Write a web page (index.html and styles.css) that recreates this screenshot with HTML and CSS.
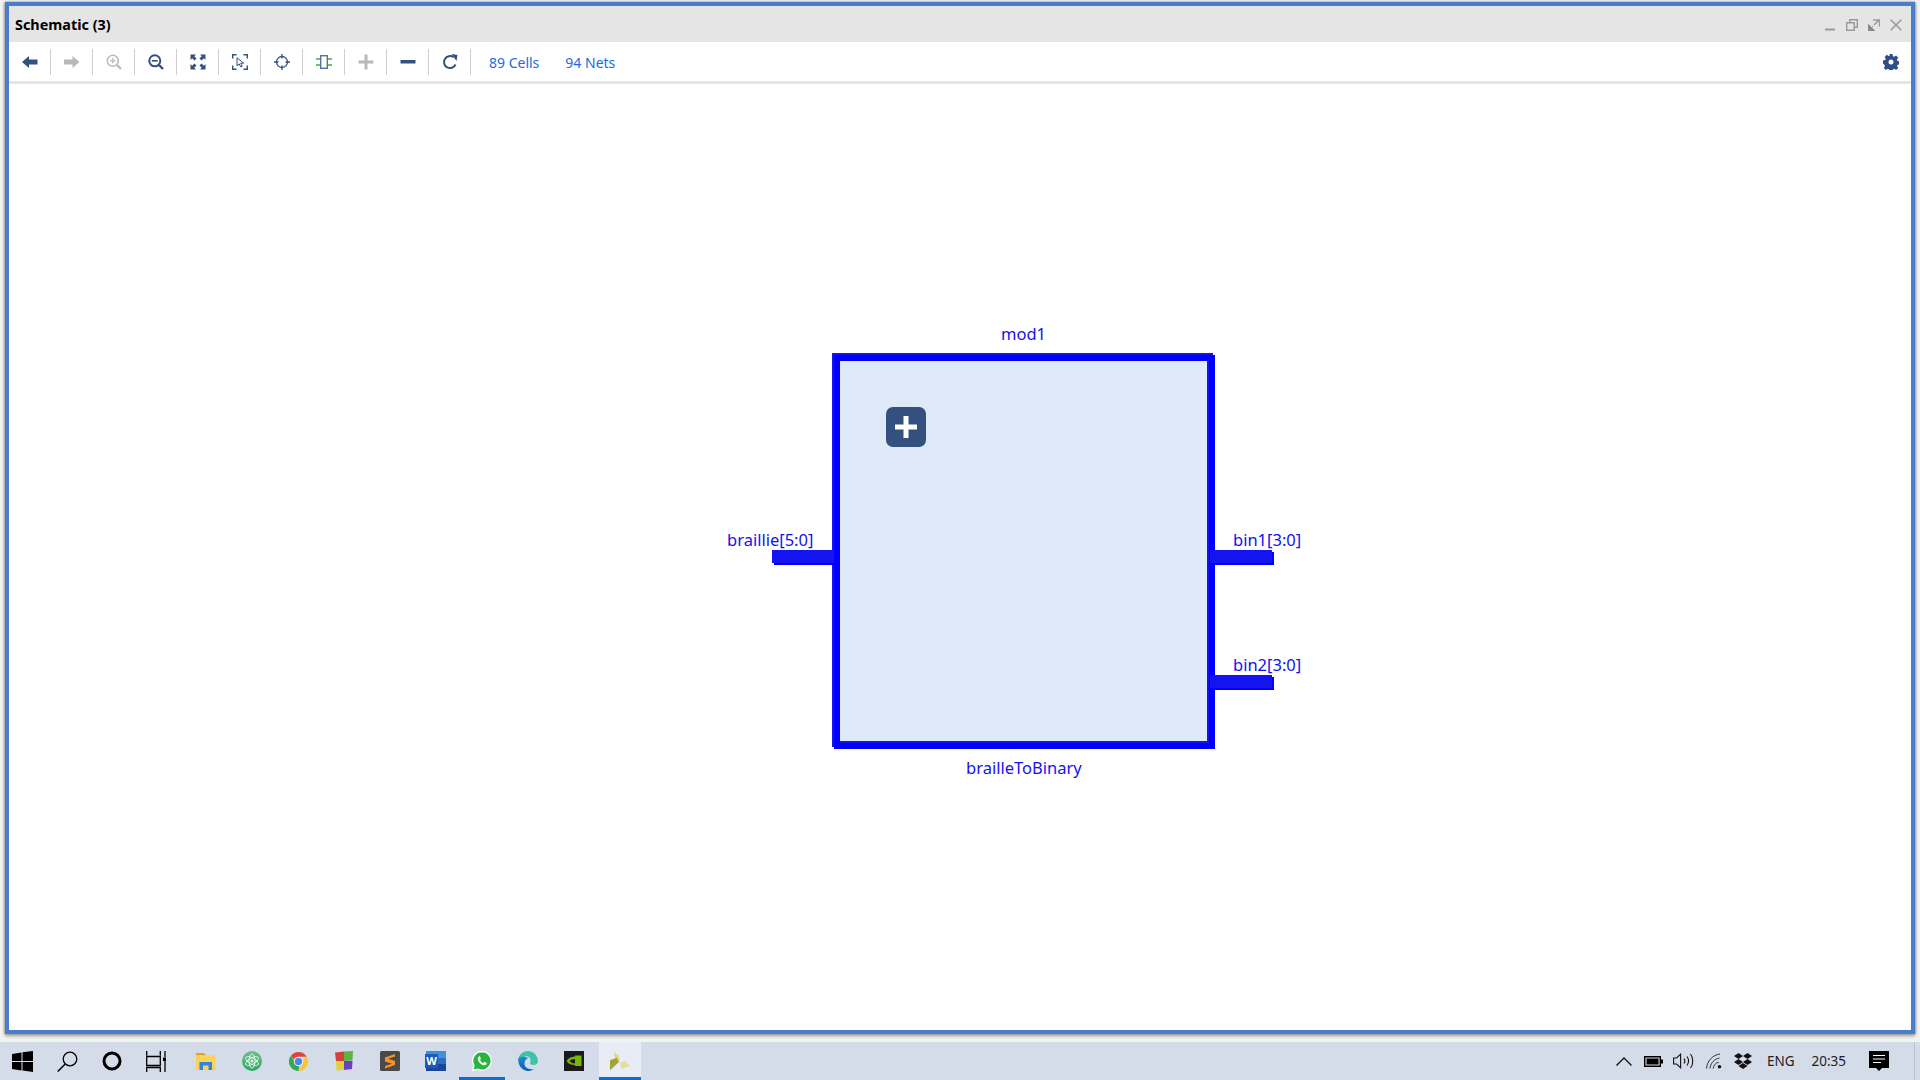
FILE: index.html
```html
<!DOCTYPE html>
<html lang="en">
<head>
    <meta charset="UTF-8">
    <title>Schematic (3)</title>
    <link rel="stylesheet" href="styles.css">
</head>
<body>
    <div class="desk">
        <div class="window">
            <div class="titlebar">
                <span class="title">Schematic (3)</span>
                <div class="win-controls">
                    <svg width="12" height="12" viewBox="0 0 12 12"><path d="M1 10.5h10" stroke="#9a9a9a" stroke-width="2" fill="none"/></svg>
                    <svg width="12" height="12" viewBox="0 0 12 12"><path d="M.7 3.7h7.6v7.6H.7zM3.7 3.5V.7h7.6v7.6H8.5" stroke="#9a9a9a" stroke-width="1.4" fill="none"/></svg>
                    <svg width="12" height="12" viewBox="0 0 12 12"><path d="M5 1h6.5v6.5M10.500 1.500 6 6" stroke="#9a9a9a" stroke-width="1.500" fill="none"/><path d="M.5 5.500v6h6L.5 5.500zM1 11l4-4" fill="#8a8a8a" stroke="#8a8a8a"/></svg>
                    <svg width="12" height="12" viewBox="0 0 12 12"><path d="M.7.7l10.600 10.600M11.300.7.7 11.300" stroke="#9a9a9a" stroke-width="1.600" fill="none"/></svg>
                </div>
            </div>

            <div class="toolbar">
                <div class="tool">
                    <svg width="16" height="14" viewBox="0 0 16 14"><path d="M0 7 7 1v3.500h8.500v5H7V13z" fill="#34507f"/></svg>
                </div>
                <div class="tool">
                    <svg width="16" height="14" viewBox="0 0 16 14"><path d="M15.500 7 8.500 1v3.500H0v5h8.500V13z" fill="#b9b9b9"/></svg>
                </div>
                <div class="tool">
                    <svg width="16" height="16" viewBox="0 0 16 16"><circle cx="6.800" cy="6.800" r="5.500" fill="none" stroke="#b9b9b9" stroke-width="1.500"/><path d="M4 6.800h5.600M6.800 4v5.600" stroke="#b9b9b9" stroke-width="1.200"/><path d="m11 11 4 4" stroke="#b9b9b9" stroke-width="2.200"/></svg>
                </div>
                <div class="tool">
                    <svg width="16" height="16" viewBox="0 0 16 16"><circle cx="6.800" cy="6.800" r="5.500" fill="none" stroke="#34507f" stroke-width="2"/><path d="M3.800 6.800h6" stroke="#34507f" stroke-width="1.600"/><path d="m11 11 4 4" stroke="#34507f" stroke-width="2.400"/></svg>
                </div>
                <div class="tool">
                    <svg width="16" height="16" viewBox="0 0 16 16"><path d="M.5.5h5.500L4.300 2.200 6.500 4.400 4.400 6.500 2.200 4.300.5 6zM15.500.5H10l1.700 1.700-2.200 2.200 2.100 2.100 2.200-2.200L15.500 6zM.5 15.500H6l-1.700-1.700 2.200-2.200-2.100-2.100-2.200 2.200L.5 10zM15.500 15.500H10l1.700-1.700-2.200-2.200 2.100-2.100 2.200 2.200L15.500 10z" fill="#34507f"/></svg>
                </div>
                <div class="tool">
                    <svg width="16" height="16" viewBox="0 0 16 16"><path d="M.7 4.500V.7h3.800M11.500.7h3.800v3.800M15.300 11.500v3.800h-3.800M4.500 15.300H.7v-3.800" fill="none" stroke="#34507f" stroke-width="1.400"/><path d="M5 3.800v8l2.200-1.900 1.500 3 1.500-.7-1.500-3h3z" fill="#fff" stroke="#34507f"/></svg>
                </div>
                <div class="tool">
                    <svg width="16" height="16" viewBox="0 0 16 16"><circle cx="8" cy="8" r="5.500" fill="none" stroke="#34507f" stroke-width="1.300"/><path d="M8 0v4.500M8 11.500V16M0 8h4.500M11.500 8H16" stroke="#34507f" stroke-width="1.300"/></svg>
                </div>
                <div class="tool">
                    <svg width="16" height="16" viewBox="0 0 16 16"><path d="M0 5h4M0 11h4M12 5h4M12 11h4" stroke="#3fae49" stroke-width="1.400"/><rect x="4.700" y="1.700" width="6.600" height="12.600" fill="#fff" stroke="#5a7199" stroke-width="1.400"/></svg>
                </div>
                <div class="tool">
                    <svg width="16" height="16" viewBox="0 0 16 16"><path d="M6.500.5h3v6h6v3h-6v6h-3v-6h-6v-3h6z" fill="#b9b9b9"/></svg>
                </div>
                <div class="tool">
                    <svg width="16" height="16" viewBox="0 0 16 16"><path d="M.5 6h15v3.500H.5z" fill="#34507f"/></svg>
                </div>
                <div class="tool">
                    <svg width="16" height="16" viewBox="0 0 16 16"><path d="M13.500 10.500A6 6 0 1 1 11.500 3.200" fill="none" stroke="#34507f" stroke-width="2"/><path d="M9.500 0 15.500 1 14.500 7z" fill="#34507f"/></svg>
                </div>
                <span class="stat stat-cells">89 Cells</span>
                <span class="stat stat-nets">94 Nets</span>
                <svg class="gear" width="16" height="16" viewBox="0 0 16 16"><path fill-rule="evenodd" d="M6.500 0h3l.4 2.200 1.300.6 1.900-1.200 2.100 2.100-1.200 1.900.6 1.300 2.200.4v3l-2.200.4-.6 1.300 1.200 1.900-2.100 2.100-1.900-1.200-1.300.6-.4 2.200h-3l-.4-2.200-1.300-.6-1.900 1.200-2.100-2.100 1.200-1.900-.6-1.300L0 9.500v-3l2.200-.4.6-1.300-1.200-1.900 2.100-2.100 1.900 1.200 1.300-.6zM8 5.500a2.500 2.500 0 1 0 0 5 2.500 2.500 0 0 0 0-5z" fill="#2f4f86"/></svg>
            </div>

            <div class="canvas">
                <!-- schematic block, coordinates are relative to the canvas -->
                <div class="block"><div class="expand"><svg width="22" height="22" viewBox="0 0 22 22"><path d="M8.500 0h5v8.500H22v5h-8.500V22h-5v-8.500H0v-5h8.500z" fill="#fff"/></svg></div></div>
                <div class="port port-left"></div>
                <div class="port port-bin1"></div>
                <div class="port port-bin2"></div>
                <span class="label label-mod">mod1</span>
                <span class="label label-type">brailleToBinary</span>
                <span class="label label-braille">braillie[5:0]</span>
                <span class="label label-bin1">bin1[3:0]</span>
                <span class="label label-bin2">bin2[3:0]</span>
            </div>
        </div>
    </div>

    <div class="taskbar">
        <div class="task task-sys">
            <svg width="21" height="21" viewBox="0 0 21 21"><path d="M0 3l9.500-1.500v8.500H0zM10.500 1.300 21 0v10H10.500zM0 11h9.500v8.500L0 18zM10.500 11H21v10l-10.500-1.500z" fill="#000"/></svg>
        </div>
        <div class="task">
            <svg width="21" height="21" viewBox="0 0 21 21"><circle cx="13" cy="8" r="6.800" fill="none" stroke="#000" stroke-width="1.300"/><path d="M8.200 13 .7 20.500" stroke="#000" stroke-width="1.500"/></svg>
        </div>
        <div class="task task-sys">
            <svg width="20" height="20" viewBox="0 0 20 20"><circle cx="10" cy="10" r="8" fill="none" stroke="#000" stroke-width="3"/></svg>
        </div>
        <div class="task task-sys">
            <svg width="20" height="21" viewBox="0 0 20 21"><path d="M.7 0v4.500M14.300 0v4.500M.7 5.500h13.600v9H.7zM.7 21v-4.500h13.600V21M19 0v6M19 10v11" fill="none" stroke="#000" stroke-width="1.300"/><path d="M17 6.500h3.500V10H17z" fill="#000"/></svg>
        </div>
        <div class="task task-first-app">
            <svg width="20" height="18" viewBox="0 0 20 18"><path d="M0 1h8l2 2.500H0z" fill="#e0a31e"/><path d="M0 3.500h19.500V18H0z" fill="#fbd35a"/><path d="M3.500 18v-8h12.500v8h-3.500v-4.500H7V18z" fill="#2f86d6"/></svg>
        </div>
        <div class="task">
            <svg width="20" height="20" viewBox="0 0 20 20"><defs><linearGradient id="atomfill" x1="0" y1="0" x2="0" y2="1"><stop offset="0" stop-color="#6dbf8a"/><stop offset="1" stop-color="#2fa866"/></linearGradient></defs><circle cx="10" cy="10" r="10" fill="url(#atomfill)"/><g fill="none" stroke="#e4f3e8" stroke-width="1"><ellipse cx="10" cy="10" rx="7" ry="3" transform="rotate(30 10 10)"/><ellipse cx="10" cy="10" rx="7" ry="3" transform="rotate(-30 10 10)"/><ellipse cx="10" cy="10" rx="7" ry="3" transform="rotate(90 10 10)"/></g><circle cx="10" cy="10" r="1.500" fill="#e4f3e8"/></svg>
        </div>
        <div class="task">
            <svg width="19" height="19" viewBox="0 0 20 20"><path d="M10 0a10 10 0 0 1 8.700 5H10a5 5 0 0 0-4.700 3.200L2.200 3.600A10 10 0 0 1 10 0z" fill="#e0453a"/><path d="M18.700 5A10 10 0 0 1 10 20l4.300-7.500A5 5 0 0 0 14.300 7.500z" fill="#fbc52d"/><path d="M10 20A10 10 0 0 1 2.200 3.600l4.300 7.600A5 5 0 0 0 11 15z" fill="#36a852"/><circle cx="10" cy="10" r="4.300" fill="#4a86e8" stroke="#fff" stroke-width="1"/></svg>
        </div>
        <div class="task">
            <svg width="20" height="20" viewBox="0 0 20 20"><path d="M1 1.500 10 .5v9.500H2z" fill="#d6403a"/><path d="M10 .5l9-.5-.5 9.500L10 10z" fill="#5cb342"/><path d="M2 10h8v9l-7.500.5z" fill="#dcd23c"/><path d="M10 10h8.500l-.5 8-8 1z" fill="#6b3fc0"/></svg>
        </div>
        <div class="task">
            <svg width="20" height="20" viewBox="0 0 20 20"><rect width="20" height="20" rx="1.500" fill="#4a4a4a"/><path d="M15 3 5 6.500v4l7 2.200-7 2.300V17.500l10-3.500v-4L8 7.800 15 5.500z" fill="#f7931e"/></svg>
        </div>
        <div class="task">
            <div class="word-icon"><span class="word-letter">W</span></div>
        </div>
        <div class="task task-running">
            <svg width="20" height="20" viewBox="0 0 20 20"><path d="M10 .5A9.300 9.300 0 0 0 2 14.500L.5 19.500l5.200-1.400A9.300 9.300 0 1 0 10 .5z" fill="#29b43f" stroke="#fff" stroke-width="1.300"/><path d="M7 5.500c-1.200.8-1.500 2.300-.8 4 .9 2.100 2.500 3.700 4.600 4.500 1.600.6 3 .3 3.800-.9.300-.5.300-.9.100-1.100l-1.900-1c-.3-.1-.5 0-.7.200l-.7.900c-1.500-.6-2.700-1.700-3.400-3.200l.7-.8c.2-.2.200-.4.100-.7l-.8-1.900c-.2-.4-.6-.4-1-.1z" fill="#fff"/></svg>
        </div>
        <div class="task">
            <svg width="20" height="20" viewBox="0 0 20 20"><defs><linearGradient id="edgeblue" x1="0" y1="0" x2="0" y2="1"><stop offset="0" stop-color="#1c8ad8"/><stop offset="1" stop-color="#0f5fb0"/></linearGradient></defs><path d="M10 0A10 10 0 0 1 20 10c0 2.500-2 4-4.500 4-2 0-3.500-.7-3.500-2 0-.6.500-1 .5-2A4 4 0 0 0 5 7.500C3 8.500.2 8 .2 8A10 10 0 0 1 10 0z" fill="#3fc3a5"/><path d="M.2 8C0 13 2.500 18.500 9 20c2.500.3 5-.5 7-2-2 .5-7.500.5-9-3-1.500-4 1-7.500 3-7.500S4 3 .2 8z" fill="url(#edgeblue)"/></svg>
        </div>
        <div class="task">
            <svg width="20" height="20" viewBox="0 0 20 20"><rect width="20" height="20" fill="#1a1a1a"/><path d="M2.500 10C5 6.500 8 5.500 11 5.500v-1h6.500v10.500H11v-1c-3.500 0-6.500-1-8.500-4z" fill="#76b900"/><path d="M5.500 10C7 8.500 9 7.800 11 8v4.500C9 12.500 7 11.700 5.500 10z" fill="#1a1a1a"/></svg>
        </div>
        <div class="task task-active">
            <svg width="20" height="19" viewBox="0 0 20 19"><path d="M4 0 8.300 3.300 10 10 5 5.700z" fill="#dfd782"/><path d="M0 8.300 6.700 5.700 9 10 0 18.300z" fill="#a6a332"/><path d="M10 11 15 9 20 14 11.700 16.700z" fill="#e3dea0"/></svg>
        </div>

        <div class="tray">
            <svg class="tray-chevron" width="16" height="9" viewBox="0 0 16 9"><path d="M.5 8.500 8 1l7.500 7.500" fill="none" stroke="#111" stroke-width="1.300"/></svg>
            <svg class="tray-battery" width="19" height="11" viewBox="0 0 19 11"><path d="M.7.7h15.600v9.600H.7z" fill="none" stroke="#000" stroke-width="1.400"/><path d="M2.500 2.500h12v6h-12zM17 3.500h2v4h-2z" fill="#000"/></svg>
            <svg class="tray-sound" width="21" height="16" viewBox="0 0 21 16"><path d="M.6 5h3l4-3.800v13.600l-4-3.800h-3z" fill="none" stroke="#111" stroke-width="1.100"/><path d="M11 5.500c1 1.400 1 3.600 0 5M14 3.500c1.800 2.600 1.800 6.400 0 9M17.500 1c3 3.600 3 10.400 0 14" fill="none" stroke="#111" stroke-width="1.100"/></svg>
            <svg class="tray-wifi" width="16" height="16" viewBox="0 0 16 16"><path d="M.6 15.500C1 8 6.500 2 14 1M4 15.500C4.400 10.500 8 6 13.500 5M7.200 15.500c.3-3 2.300-5.500 5.600-6.300" fill="none" stroke="#333" stroke-width="1"/><circle cx="13.500" cy="13.700" r="1.800" fill="#111"/></svg>
            <svg class="tray-dropbox" width="18" height="16" viewBox="0 0 18 16"><path d="M4.500 0 9 3 4.500 6 0 3zM13.500 0 18 3l-4.500 3L9 3zM4.500 6 9 9l-4.500 3L0 9zM13.500 6 18 9l-4.500 3L9 9zM4.500 13 9 10l4.500 3L9 16z" fill="#111"/></svg>
            <span class="tray-text tray-lang">ENG</span>
            <span class="tray-text tray-clock">20:35</span>
            <svg class="tray-notify" width="20" height="20" viewBox="0 0 20 20"><path d="M0 0h20v17h-7l-3 3-3-3H0z" fill="#000"/><path d="M4 4.500h12M4 8h12M4 11.500h8" stroke="#fff" stroke-width="1"/></svg>
        </div>
    </div>
</body>
</html>
```

FILE: styles.css
```css
body {
    margin: 0;
    width: 1920px;
    height: 1080px;
    overflow: hidden;
    font-family: "Noto Sans", sans-serif;
    background: #fff;
}
.desk {
    height: 1042px;
    box-sizing: border-box;
    padding: 2px 5px 8px 5px;
    display: flex;
    background: #f2f2f2;
}
.window {
    flex: 1;
    display: flex;
    flex-direction: column;
    border: 4px solid #4a7dcb;
    box-shadow: 0 2px 3px #a0a0a0, -1px 0 2px #a8a8a8, 1px 0 2px #a8a8a8;
    background: #fff;
}

/* barra del titolo */
.titlebar {
    height: 36px;
    flex: none;
    background: #e5e5e5;
    display: flex;
    align-items: center;
    justify-content: space-between;
    padding: 0 9px 0 6px;
}
.title {
    font-size: 14.400px;
    font-weight: 700;
    color: #000;
}
.win-controls {
    display: flex;
    gap: 10px;
    padding-top: 2px;
}

/* toolbar */
.toolbar {
    height: 39px;
    flex: none;
    display: flex;
    align-items: center;
    border-bottom: 3px solid #e5e5e5;
    padding-right: 12px;
}
.tool {
    width: 41px;
    height: 26px;
    display: flex;
    align-items: center;
    justify-content: center;
    border-right: 1px solid #cfcfcf;
}
.stat {
    font-size: 14px;
    color: #2468e4;
    padding-top: 1px;
}
.stat-cells {
    margin-left: 18px;
}
.stat-nets {
    margin-left: 26px;
}
.gear {
    margin-left: auto;
}

/* schematic */
.canvas {
    flex: 1;
    position: relative;
    background: #fff;
}
.block {
    position: absolute;
    left: 823px;
    top: 269px;
    box-sizing: border-box;
    width: 381px;
    height: 394px;
    border: 6px solid #1414f0;
    background: #deeaf8;
}
/* seconda linea spostata di 2px, come nel disegno originale */
.block::before {
    content: "";
    position: absolute;
    left: -4px;
    top: -4px;
    box-sizing: border-box;
    width: 381px;
    height: 394px;
    border: 6px solid #0000ff;
}
.expand {
    position: absolute;
    left: 48px;
    top: 48px;
    width: 40px;
    height: 40px;
    border-radius: 7px;
    background: #34507f;
    display: flex;
    align-items: center;
    justify-content: center;
}
.port {
    position: absolute;
    height: 13px;
    background: #1414f0;
    box-shadow: 2px 2px 0 #0000ff;
}
.port-left {
    left: 763px;
    top: 466px;
    width: 62px;
}
.port-bin1 {
    left: 1201px;
    top: 466px;
    width: 62px;
}
.port-bin2 {
    left: 1201px;
    top: 591px;
    width: 62px;
}
.label {
    position: absolute;
    font-size: 16.500px;
    line-height: 22px;
    color: #1212f0;
    white-space: nowrap;
}
.label-mod {
    left: 992px;
    top: 239px;
}
.label-type {
    left: 957px;
    top: 673px;
}
.label-braille {
    left: 718px;
    top: 445px;
}
.label-bin1 {
    left: 1224px;
    top: 445px;
}
.label-bin2 {
    left: 1224px;
    top: 570px;
}

/* taskbar */
.taskbar {
    height: 38px;
    display: flex;
    align-items: center;
    background: #d4dcea;
}
.task {
    width: 46px;
    height: 38px;
    flex: none;
    box-sizing: border-box;
    display: flex;
    align-items: center;
    justify-content: center;
}
.task-sys {
    width: 44px;
}
.task-first-app {
    margin-left: 5px;
}
.task-running {
    box-shadow: inset 0 -3px 0 #0a6fd0;
}
.task-active {
    width: 42px;
    margin-left: 2px;
    background: #e8ecf4;
    box-shadow: inset 0 -3px 0 #0a6fd0;
}
.word-icon {
    width: 20px;
    height: 20px;
    position: relative;
    background: linear-gradient(#3f8fdc 0 33%, #2a6fc4 33% 66%, #17479c 66%);
    display: flex;
    align-items: center;
}
.word-letter {
    width: 13px;
    height: 14px;
    margin-left: -1px;
    background: #1b5cb8;
    color: #fff;
    font-size: 11px;
    font-weight: 700;
    line-height: 14px;
    text-align: center;
}

/* area di notifica */
.tray {
    margin-left: auto;
    margin-right: 5px;
    height: 38px;
    display: flex;
    align-items: center;
    color: #111;
    border-right: 1px solid #b8c0d0;
}
.tray-battery {
    margin-left: 12px;
}
.tray-sound {
    margin-left: 10px;
}
.tray-wifi {
    margin-left: 12px;
}
.tray-dropbox {
    margin-left: 12px;
}
.tray-text {
    font-size: 13.500px;
    color: #222;
}
.tray-lang {
    margin-left: 15px;
}
.tray-clock {
    margin-left: 17px;
}
.tray-notify {
    margin-left: 23px;
    margin-right: 25px;
}
```
